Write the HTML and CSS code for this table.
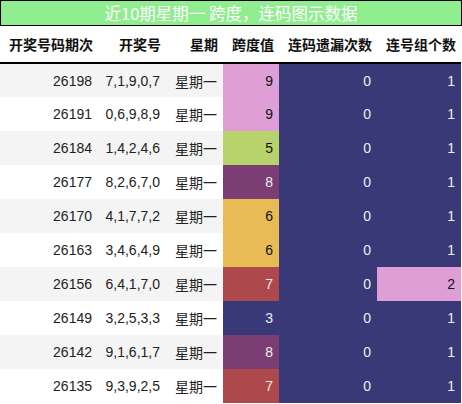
FILE: index.html
```html
<!DOCTYPE html>
<html lang="zh">
<head>
    <meta charset="UTF-8">
    <title>跨度连码图示</title>
    <link rel="stylesheet" href="styles.css">
</head>
<body>
    <div class="title">近10期星期一 跨度，连码图示数据</div>
    <table class="data">
        <colgroup>
            <col class="c1"><col class="c2"><col class="c3"><col class="c4"><col class="c5"><col class="c6">
        </colgroup>
        <thead>
            <tr><th>开奖号码期次</th><th>开奖号</th><th>星期</th><th>跨度值</th><th>连码遗漏次数</th><th>连号组个数</th></tr>
        </thead>
        <tbody>
            <tr><td>26198</td><td>7,1,9,0,7</td><td class="cn">星期一</td><td class="s-pink">9</td><td class="navy">0</td><td class="navy">1</td></tr>
            <tr><td>26191</td><td>0,6,9,8,9</td><td class="cn">星期一</td><td class="s-pink">9</td><td class="navy">0</td><td class="navy">1</td></tr>
            <tr><td>26184</td><td>1,4,2,4,6</td><td class="cn">星期一</td><td class="s-green">5</td><td class="navy">0</td><td class="navy">1</td></tr>
            <tr><td>26177</td><td>8,2,6,7,0</td><td class="cn">星期一</td><td class="s-purple">8</td><td class="navy">0</td><td class="navy">1</td></tr>
            <tr><td>26170</td><td>4,1,7,7,2</td><td class="cn">星期一</td><td class="s-gold">6</td><td class="navy">0</td><td class="navy">1</td></tr>
            <tr><td>26163</td><td>3,4,6,4,9</td><td class="cn">星期一</td><td class="s-gold">6</td><td class="navy">0</td><td class="navy">1</td></tr>
            <tr><td>26156</td><td>6,4,1,7,0</td><td class="cn">星期一</td><td class="s-red">7</td><td class="navy">0</td><td class="s-pink">2</td></tr>
            <tr><td>26149</td><td>3,2,5,3,3</td><td class="cn">星期一</td><td class="navy">3</td><td class="navy">0</td><td class="navy">1</td></tr>
            <tr><td>26142</td><td>9,1,6,1,7</td><td class="cn">星期一</td><td class="s-purple">8</td><td class="navy">0</td><td class="navy">1</td></tr>
            <tr><td>26135</td><td>9,3,9,2,5</td><td class="cn">星期一</td><td class="s-red">7</td><td class="navy">0</td><td class="navy">1</td></tr>
        </tbody>
    </table>
</body>
</html>
```

FILE: styles.css
```css
*{margin:0;padding:0;box-sizing:border-box;}
body{font-family:"Liberation Sans","Noto Sans CJK SC",sans-serif;font-size:14px;color:#222;background:#fff;}
.title{
    width:462px;
    height:26px;
    line-height:24px;
    border:1px solid #000;
    background-color:#90ee90;
    color:#fff;
    font-size:16.5px;
    text-align:center;
    font-family:"Noto Sans CJK SC",sans-serif;
}
table.data{width:461px;border-collapse:collapse;table-layout:fixed;}
col.c1{width:98px;}
col.c2{width:68px;}
col.c3{width:57px;}
col.c4{width:56px;}
col.c5{width:98px;}
col.c6{width:84px;}
th{
    height:37px;
    padding:0 5px 0 0;
    text-align:right;
    font-family:"Noto Sans CJK SC",sans-serif;
    font-size:14px;
    font-weight:bold;
    color:#111;
    border-bottom:2px solid #000;
    white-space:nowrap;
}
td{height:34px;padding:0 6px 0 0;text-align:right;white-space:nowrap;}
td.cn{font-family:"Noto Sans CJK SC",sans-serif;}
tbody tr:nth-child(odd){background-color:#f4f4f4;}
tbody tr:nth-child(even){background-color:#fff;}
.navy{background-color:#393978;color:#eee;}
.s-pink{background-color:#dd9fd5;color:#111;}
.s-green{background-color:#b8d36b;color:#111;}
.s-purple{background-color:#7b3e74;color:#eee;}
.s-gold{background-color:#e9bb55;color:#111;}
.s-red{background-color:#ad494d;color:#eee;}
```
